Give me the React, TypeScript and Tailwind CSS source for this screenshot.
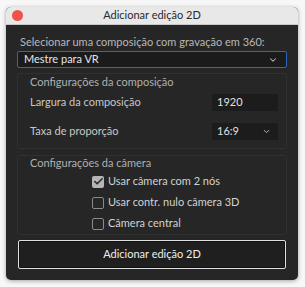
import { ChevronDown, Check } from "lucide-react";

const font = { fontFamily: "Lato, 'Open Sans', sans-serif" };

function CheckRow({ label, checked }: { label: string; checked?: boolean }) {
  return (
    <div className="flex h-[21px] items-center gap-[4px] pl-[62px]">
      <span
        className={
          checked
            ? "flex h-[12px] w-[12px] items-center justify-center rounded-[2px] bg-[#b5b5b5]"
            : "h-[12px] w-[12px] rounded-[2px] border border-[#8a8a8a] bg-[#262626]"
        }
      >
        {checked && <Check size={11} strokeWidth={3.5} className="text-[#2a2a2a]" />}
      </span>
      <span className="text-[11px] text-[#d2d2d2]">{label}</span>
    </div>
  );
}

export default function App() {
  return (
    <div className="h-[287px] w-[305px] bg-[#f7f7f7] pl-[6px] pt-[7px]" style={font}>
      <div className="flex h-[273px] w-[292px] flex-col overflow-hidden rounded-[5px] bg-[#262626] shadow-[0_1px_4px_rgba(0,0,0,0.35)]">
        <div className="relative flex h-[18px] items-center justify-center border-b border-[#c9c9c9] bg-[#e8e8e8]">
          <span className="absolute left-[6px] top-[3px] h-[11px] w-[11px] rounded-full bg-[#f0514a]" />
          <span className="text-[11px] text-[#2a2a2a]">Adicionar edição 2D</span>
        </div>
        <div className="flex flex-col px-[11px] pt-[10px]">
          <div className="pl-[3px] text-[11px] leading-[14px] text-[#b8b8b8]">
            Selecionar uma composição com gravação em 360:
          </div>
          <div className="mt-[2px] flex h-[17px] items-center justify-between rounded-[2px] border border-[#2e68b8] bg-[#1b1b1b] pl-[6px] pr-[8px]">
            <span className="text-[11px] text-[#e6e6e6]">Mestre para VR</span>
            <ChevronDown size={10} strokeWidth={2.5} className="text-[#bdbdbd]" />
          </div>

          <div className="mt-[5px] rounded-[2px] border border-[#303030] pb-[7px] pl-[12px] pr-[8px]">
            <div className="text-[11px] leading-[16px] text-[#b0b0b0]">Configurações da composição</div>
            <div className="mt-[2px] flex h-[20px] items-center justify-between">
              <span className="text-[11px] text-[#c8c8c8]">Largura da composição</span>
              <div className="flex h-[17px] w-[66px] items-center bg-[#1c1c1c] pl-[5px] text-[11px] text-[#e0e0e0]">1920</div>
            </div>
            <div className="mt-[9px] flex h-[20px] items-center justify-between">
              <span className="text-[11px] text-[#c8c8c8]">Taxa de proporção</span>
              <div className="flex h-[17px] w-[66px] items-center justify-between bg-[#1c1c1c] pl-[5px] pr-[7px] text-[11px] text-[#e0e0e0]">
                <span>16:9</span>
                <ChevronDown size={9} strokeWidth={2.5} className="text-[#bdbdbd]" />
              </div>
            </div>
          </div>

          <div className="mt-[6px] rounded-[2px] border border-[#303030] px-[12px]">
            <div className="text-[11px] leading-[14px] text-[#b0b0b0]">Configurações da câmera</div>
            <div className="mt-[1px]">
              <CheckRow label="Usar câmera com 2 nós" checked />
              <CheckRow label="Usar contr. nulo câmera 3D" />
              <CheckRow label="Câmera central" />
            </div>
          </div>

          <div className="mx-[1px] mt-[5px] flex h-[29px] items-center justify-center rounded-[2px] border border-[#e0e0e0] bg-[#1f1f1f] shadow-[inset_0_0_0_1px_#111]">
            <span className="text-[11px] text-[#eeeeee]">Adicionar edição 2D</span>
          </div>
        </div>
      </div>
    </div>
  );
}
